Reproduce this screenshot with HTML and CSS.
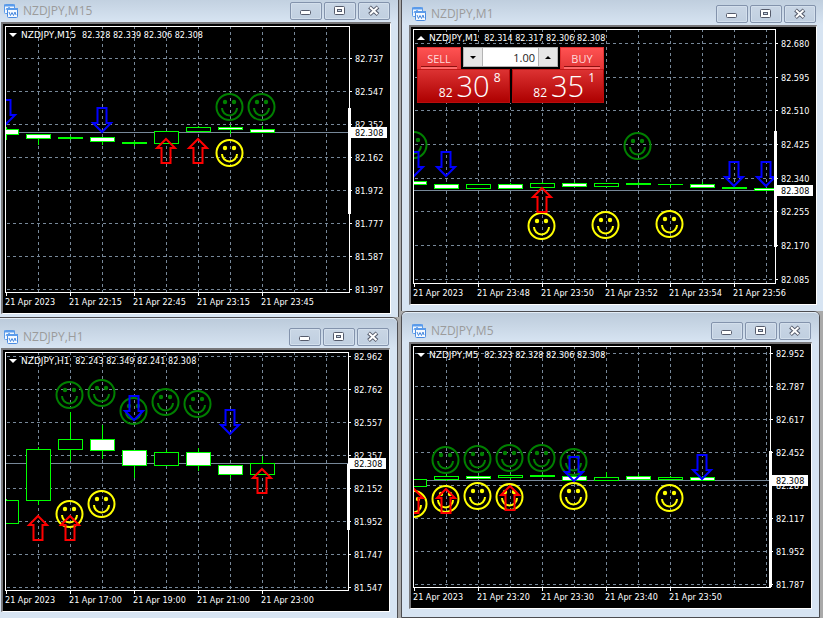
FILE: index.html
```html
<!DOCTYPE html>
<html lang="en">
<head>
  <meta charset="UTF-8">
  <meta name="viewport" content="width=device-width, initial-scale=1.0">
  <title>NZDJPY Charts</title>
  <link rel="stylesheet" href="styles.css">
</head>
<body>
  <!-- Shared icons -->
  <svg class="sprite" aria-hidden="true">
    <symbol id="icon-chart" viewBox="0 0 14 14">
      <rect x="0.5" y="0.5" width="10" height="9" rx="1" fill="#f4f9ff" stroke="#5b9bea"/>
      <path d="M0 1.5h11" stroke="#5b9bea" stroke-width="2"/>
      <path d="M2 6l1-2 1 2 1-3 1 2 1-1 1 2" fill="none" stroke="#5b9bea"/>
      <rect x="3.5" y="4.5" width="10" height="9" rx="1" fill="#f4f9ff" stroke="#4a8be0"/>
      <path d="M3 5h11" stroke="#5b9bea" stroke-width="2"/>
      <path d="M5 8l1.500 3.500L8 8.500l1.500 3L11 8l1 3" fill="none" stroke="#4a8be0"/>
    </symbol>
    <symbol id="icon-min" viewBox="0 0 12 12">
      <rect x="0.500" y="5.500" width="10" height="4" rx="1" fill="#fff" stroke="#555b6b"/>
    </symbol>
    <symbol id="icon-max" viewBox="0 0 12 12">
      <rect x="0.500" y="1.500" width="10" height="8" rx="1" fill="#fff" stroke="#555b6b"/>
      <rect x="3.500" y="4.500" width="4" height="2" fill="#c8d6e6" stroke="#555b6b"/>
    </symbol>
    <symbol id="icon-close" viewBox="0 0 12 12">
      <path d="M1.500 2l8.500 7.500M10 2L1.500 9.500" stroke="#555b6b" stroke-width="4"/>
      <path d="M2 2.300l7.500 6.900M9.500 2.300L2 9.200" stroke="#fff" stroke-width="2"/>
    </symbol>
  </svg>

  <main class="workspace">
    <div class="column column-left">
      <section class="window window-m15">
        <header class="titlebar">
          <svg class="app-icon"><use href="#icon-chart"/></svg>
          <h2>NZDJPY,M15</h2>
          <button type="button" aria-label="Minimize"><svg><use href="#icon-min"/></svg></button>
          <button type="button" aria-label="Maximize"><svg><use href="#icon-max"/></svg></button>
          <button type="button" aria-label="Close"><svg><use href="#icon-close"/></svg></button>
        </header>
        <div class="chart" data-chart="m15"></div>
      </section>

      <section class="window window-h1">
        <header class="titlebar">
          <svg class="app-icon"><use href="#icon-chart"/></svg>
          <h2>NZDJPY,H1</h2>
          <button type="button" aria-label="Minimize"><svg><use href="#icon-min"/></svg></button>
          <button type="button" aria-label="Maximize"><svg><use href="#icon-max"/></svg></button>
          <button type="button" aria-label="Close"><svg><use href="#icon-close"/></svg></button>
        </header>
        <div class="chart" data-chart="h1"></div>
      </section>
    </div>

    <div class="column column-right">
      <section class="window window-m1">
        <header class="titlebar">
          <svg class="app-icon"><use href="#icon-chart"/></svg>
          <h2>NZDJPY,M1</h2>
          <button type="button" aria-label="Minimize"><svg><use href="#icon-min"/></svg></button>
          <button type="button" aria-label="Maximize"><svg><use href="#icon-max"/></svg></button>
          <button type="button" aria-label="Close"><svg><use href="#icon-close"/></svg></button>
        </header>
        <div class="chart" data-chart="m1">
          <!-- One click trading -->
          <form class="trade">
            <div class="trade-top">
              <button type="button" class="side">SELL</button>
              <div class="volume">
                <button type="button" aria-label="Decrease volume"><span class="arrow arrow-down"></span></button>
                <input type="text" value="1.00" aria-label="Volume">
                <button type="button" aria-label="Increase volume"><span class="arrow arrow-up"></span></button>
              </div>
              <button type="button" class="side">BUY</button>
            </div>
            <div class="trade-prices">
              <button type="button" class="price"><small>82</small><b>30</b><sup>8</sup></button>
              <button type="button" class="price"><small>82</small><b>35</b><sup>1</sup></button>
            </div>
          </form>
        </div>
      </section>

      <section class="window window-m5">
        <header class="titlebar">
          <svg class="app-icon"><use href="#icon-chart"/></svg>
          <h2>NZDJPY,M5</h2>
          <button type="button" aria-label="Minimize"><svg><use href="#icon-min"/></svg></button>
          <button type="button" aria-label="Maximize"><svg><use href="#icon-max"/></svg></button>
          <button type="button" aria-label="Close"><svg><use href="#icon-close"/></svg></button>
        </header>
        <div class="chart" data-chart="m5"></div>
      </section>
    </div>
  </main>

  <script src="script.js"></script>
</body>
</html>
```

FILE: styles.css
```css
/* General Styles */
* {
  box-sizing: border-box;
}

body {
  margin: 0;
  background-color: #a9a9a9;
  font-family: "Open Sans", "Noto Sans", sans-serif;
}

button, input {
  margin: 0;
  padding: 0;
  font-family: inherit;
}

.sprite {
  display: none;
}

/* Workspace: the outer window edges run past the viewport */
.workspace {
  display: flex;
  gap: 2px;
  min-height: 100vh;
  overflow: hidden;
}

.column {
  display: flex;
  flex-direction: column;
  min-width: 0;
}

.column-left {
  flex: 1 1 406px;
  margin: -9px 0 0 -7px;
}

.column-right {
  flex: 1 1 424px;
  margin: -6px -2px 0 0;
}

/* Windows */
.window {
  padding: 0 7px 8px;
  border: 1px solid #4c4c50;
  border-bottom: 0;
  border-radius: 6px 6px 0 0;
  background: #d7e4f2;
}

.window-m15 {
  padding-bottom: 3px;
}

.window-m1 {
  padding-bottom: 6px;
}

.window-h1 {
  margin-right: 1px;
  padding-bottom: 6px;
}

.window-m5 {
  margin-right: 5px;
  border-bottom: 1px solid #4c4c50;
}

.titlebar {
  display: flex;
  align-items: center;
  gap: 2px;
  height: 30px;
  margin: 0 -7px;
  padding: 9px 8px 3px 10px;
  border-top: 1px solid #e4edf6;
  border-radius: 5px 5px 0 0;
  background: linear-gradient(#bccbdb, #d7e4f2);
}

.titlebar h2 {
  flex: 1;
  margin: 0;
  padding-left: 3px;
  font-size: 12px;
  font-weight: 400;
  line-height: 18px;
  color: #9b9b9b;
}

.app-icon {
  width: 14px;
  height: 14px;
}

.titlebar button {
  display: flex;
  align-items: center;
  justify-content: center;
  width: 32px;
  height: 18px;
  border: 1px solid #8393ac;
  border-radius: 2px;
  background: linear-gradient(#c9d6e5, #c0cfe0);
  box-shadow: inset 0 0 0 1px #d3dfec;
}

.titlebar button svg {
  width: 12px;
  height: 12px;
}

/* Charts */
.chart {
  position: relative;
  border: 1px solid #fff;
  border-width: 2px 1px 1px 2px;
  border-top-color: #77777a;
  border-left-color: #77777a;
  background: #000;
}

.chart svg {
  display: block;
  width: 100%;
}

.window-m15 .chart svg {
  height: 289px;
}

.window-h1 .chart svg {
  height: 261px;
}

.window-m1 .chart svg {
  height: 277px;
}

.window-m5 .chart svg {
  height: 264px;
}

.chart text {
  font-family: "DejaVu Sans Condensed", "DejaVu Sans", sans-serif;
  font-size: 9px;
  white-space: pre;
  fill: #fff;
}

.chart .symbol {
  font-family: "DejaVu Sans", sans-serif;
}

.chart .tag-text {
  fill: #000;
}

.crisp {
  shape-rendering: crispEdges;
}

.grid {
  stroke: #778899;
  stroke-dasharray: 3 3;
}

.price-line {
  stroke: #778899;
}

.axis {
  fill: none;
  stroke: #fff;
}

.fill-white {
  fill: #fff;
}

.candle {
  stroke: #0f0;
}

.candle-up {
  fill: #000;
}

.candle-down {
  fill: #fff;
}

.candle-doji {
  fill: #0f0;
  stroke: none;
}

.face {
  fill: none;
  stroke-width: 2;
}

.face-green {
  color: #008000;
  stroke: currentColor;
}

.face-yellow {
  color: #ff0;
  stroke: currentColor;
}

.eye {
  fill: currentColor;
  stroke: none;
}

.signal {
  fill: none;
  stroke-width: 2;
}

.signal-down {
  stroke: #00f;
}

.signal-up {
  stroke: #f00;
}

/* Trade panel sits over the chart */
.trade {
  position: absolute;
  top: 20px;
  left: 6px;
  width: 187px;
  background: #000;
}

.trade-top {
  display: flex;
  gap: 2px;
  height: 22px;
}

.side {
  position: relative;
  flex: none;
  width: 44px;
  border: 1px solid #e03030;
  border-bottom: 0;
  background: linear-gradient(#ff5252, #e23636);
  color: #ffdada;
  font-size: 11px;
  line-height: 20px;
}

.side::after {
  content: "";
  position: absolute;
  right: 3px;
  bottom: 0;
  left: 3px;
  height: 2px;
  border-top: 1px solid #8e1010;
  background: #ff6a6a;
}

.volume {
  display: flex;
  flex: 1;
  min-width: 0;
  height: 20px;
  border: 1px solid #b4b4b4;
  background: #fff;
}

.volume button {
  display: flex;
  flex: none;
  align-items: center;
  justify-content: center;
  width: 18px;
  border: 0;
  background: #e6e6e6;
}

.volume input {
  flex: 1;
  width: 0;
  min-width: 0;
  padding-right: 3px;
  border: 1px solid #b4b4b4;
  border-width: 0 1px;
  background: #fff;
  color: #222;
  font-size: 11px;
  text-align: right;
}

.arrow {
  border: 3px solid transparent;
}

.arrow-down {
  border-top-color: #000;
  border-bottom: 0;
}

.arrow-up {
  border-bottom-color: #000;
  border-top: 0;
}

.trade-prices {
  display: flex;
  gap: 2px;
}

.price {
  display: flex;
  flex: 1;
  align-items: baseline;
  justify-content: flex-end;
  gap: 4px;
  height: 34px;
  padding-right: 8px;
  border: 1px solid #b80c0c;
  border-top-color: #c01818;
  background: linear-gradient(#dc3232, #ad0000);
  color: #fff;
}

.price small {
  font-size: 12px;
  line-height: 12px;
}

.price b {
  font-size: 29px;
  font-weight: 300;
  line-height: 32px;
}

.price sup {
  align-self: flex-start;
  padding-top: 2px;
  font-size: 12px;
  line-height: 12px;
}

/* Narrow screens: stack the windows */
@media (max-width: 640px) {
  .workspace {
    flex-direction: column;
  }

  .column {
    flex: none;
    margin: 0;
  }
}
```

FILE: script.js
```javascript
// Candles: [type, bodyTop, bodyBottom, wickTop, wickBottom]
// Faces and signals: [kind, bar index, y]
const charts = {
  m15: {
    symbol: 'NZDJPY,M15',
    quotes: '82.328 82.339 82.306 82.308',
    rows: [34, 67, 100, 133, 166, 199, 232, 265],
    prices: ['82.737', '82.547', '82.352', '82.162', '81.972', '81.777', '81.587', '81.397'],
    dates: ['21 Apr 2023', '21 Apr 22:15', '21 Apr 22:45', '21 Apr 23:15', '21 Apr 23:45'],
    price: 108,
    range: [84, 190],
    candles: [
      ['down', 105, 111, 103, 116],
      ['down', 110, 115, 110, 121],
      ['doji', 113, 115, 112, 116],
      ['down', 113, 118, 113, 121],
      ['doji', 118, 120, 117, 122],
      ['up', 107, 120, 107, 120],
      ['up', 103, 108, 102, 108],
      ['down', 103, 106, 101, 110],
      ['down', 105, 109, 102, 109]
    ],
    faces: [['green', 7, 83], ['green', 8, 83], ['yellow', 7, 129]],
    signals: [['down', 0, 101], ['down', 3, 109], ['up', 5, 114], ['up', 6, 114]]
  },
  h1: {
    symbol: 'NZDJPY,H1',
    quotes: '82.243 82.349 82.241 82.308',
    rows: [6, 39, 72, 105, 138, 171, 204, 237],
    prices: ['82.962', '82.762', '82.557', '82.357', '82.152', '81.952', '81.747', '81.547'],
    dates: ['21 Apr 2023', '21 Apr 17:00', '21 Apr 19:00', '21 Apr 21:00', '21 Apr 23:00'],
    price: 113,
    range: [114, 180],
    candles: [
      ['up', 150, 174, 149, 174],
      ['up', 99, 151, 97, 155],
      ['up', 89, 100, 62, 111],
      ['down', 89, 101, 75, 109],
      ['down', 100, 116, 100, 128],
      ['up', 102, 116, 100, 116],
      ['down', 102, 116, 98, 121],
      ['down', 115, 125, 115, 128],
      ['up', 113, 125, 106, 125]
    ],
    faces: [
      ['green', 2, 45], ['green', 3, 43], ['green', 4, 61], ['green', 5, 52], ['green', 6, 54],
      ['yellow', 2, 164], ['yellow', 3, 154]
    ],
    signals: [['down', 4, 71], ['down', 7, 85], ['up', 1, 165], ['up', 2, 165], ['up', 8, 118]]
  },
  m1: {
    symbol: 'NZDJPY,M1',
    quotes: '82.314 82.317 82.306 82.308',
    panelOpen: true,
    rows: [16, 50, 83, 117, 151, 184, 218, 252],
    prices: ['82.680', '82.595', '82.510', '82.425', '82.340', '82.255', '82.170', '82.085'],
    dates: ['21 Apr 2023', '21 Apr 23:48', '21 Apr 23:50', '21 Apr 23:52', '21 Apr 23:54', '21 Apr 23:56'],
    price: 163,
    range: [104, 220],
    candles: [
      ['down', 154, 158, 154, 158],
      ['down', 157, 162, 157, 162],
      ['up', 157, 162, 157, 162],
      ['down', 157, 162, 156, 162],
      ['up', 156, 161, 155, 161],
      ['down', 156, 160, 155, 160],
      ['up', 156, 160, 156, 160],
      ['doji', 156, 158, 155, 158],
      ['doji', 157, 158, 157, 161],
      ['down', 157, 161, 155, 161],
      ['doji', 160, 162, 159, 162],
      ['down', 161, 164, 161, 164]
    ],
    faces: [['green', 0, 118], ['green', 7, 119], ['yellow', 4, 199], ['yellow', 6, 198], ['yellow', 8, 197]],
    signals: [['down', 0, 150], ['down', 1, 150], ['down', 10, 160], ['down', 11, 160], ['up', 4, 160]]
  },
  m5: {
    symbol: 'NZDJPY,M5',
    quotes: '82.323 82.328 82.306 82.308',
    rows: [9, 42, 75, 108, 141, 174, 207, 240],
    prices: ['82.952', '82.787', '82.617', '82.452', '82.287', '82.117', '81.952', '81.787'],
    dates: ['21 Apr 2023', '21 Apr 23:20', '21 Apr 23:30', '21 Apr 23:40', '21 Apr 23:50'],
    price: 136,
    range: [107, 243],
    candles: [
      ['up', 135, 143, 135, 143],
      ['up', 132, 136, 131, 137],
      ['down', 132, 135, 131, 135],
      ['up', 131, 134, 130, 135],
      ['doji', 131, 133, 130, 133],
      ['down', 132, 137, 132, 138],
      ['up', 133, 137, 128, 137],
      ['down', 132, 136, 130, 136],
      ['up', 133, 136, 132, 136],
      ['down', 133, 137, 132, 137]
    ],
    faces: [
      ['green', 1, 116], ['green', 2, 115], ['green', 3, 114], ['green', 4, 114], ['green', 5, 118],
      ['yellow', 0, 160], ['yellow', 1, 155], ['yellow', 2, 152], ['yellow', 3, 153],
      ['yellow', 5, 152], ['yellow', 8, 154]
    ],
    signals: [['down', 5, 138], ['down', 9, 136], ['up', 0, 144], ['up', 1, 144], ['up', 3, 141]]
  }
};

const BAR = 32;
const LEFT = 2;
const TOP = 2;

// x of the middle of a bar
const barX = (i) => LEFT + 1 + i * BAR;

function line(x1, y1, x2, y2, cls) {
  return `<path class="crisp ${cls}" fill="none" d="M${x1} ${y1}L${x2} ${y2}"/>`;
}

function candle([type, top, bottom, high, low], i) {
  const x = barX(i);
  let out = line(x + 0.5, high, x + 0.5, low, 'candle');
  if (type === 'doji') {
    out += `<rect class="crisp candle-doji" x="${x - 12}" y="${top}" width="25" height="${bottom - top}"/>`;
  } else {
    out += `<rect class="crisp candle candle-${type}" x="${x - 11.5}" y="${top + 0.5}" width="24" height="${bottom - top - 1}"/>`;
  }
  return out;
}

function face([color, i, y]) {
  return `<g class="face face-${color}" transform="translate(${barX(i) - 0.5} ${y})">
    <circle r="13"/>
    <circle class="eye" cx="-4.5" cy="-5" r="2.2"/>
    <circle class="eye" cx="4.5" cy="-5" r="2.2"/>
    <path d="M-7.500 1a7.500 7.500 0 0 0 15 0"/>
  </g>`;
}

function signal([type, i, y]) {
  const flip = type === 'up' ? ' scale(1 -1)' : '';
  return `<path class="signal signal-${type}" transform="translate(${barX(i)} ${y})${flip}"
    d="M-4.500-25h9v15h4.500L0-1-9-10h4.500z"/>`;
}

function drawChart(box) {
  const name = box.dataset.chart;
  const data = charts[name];
  const old = box.querySelector('svg');
  if (old) old.remove();

  const svg = document.createElementNS('http://www.w3.org/2000/svg', 'svg');
  box.prepend(svg);
  const right = box.clientWidth - 41;
  const bottom = svg.getBoundingClientRect().height - 21;

  let out = `<clipPath id="clip-${name}"><rect x="${LEFT + 1}" y="${TOP}" width="${right - LEFT - 1}" height="${bottom - TOP}"/></clipPath>`;

  // Grid
  for (let x = barX(1); x < right; x += BAR) {
    out += line(x + 0.5, TOP, x + 0.5, bottom, 'grid');
  }
  data.rows.forEach((y) => {
    out += line(LEFT + 2, y + 0.5, right, y + 0.5, 'grid');
    out += line(right, y + 0.5, right + 3, y + 0.5, 'axis');
  });
  out += line(LEFT, data.price + 0.5, right, data.price + 0.5, 'price-line');

  // Bars and markers
  out += `<g clip-path="url(#clip-${name})">`;
  out += data.candles.map(candle).join('');
  out += data.faces.map(face).join('');
  out += data.signals.map(signal).join('');
  out += '</g>';

  // Axes
  out += `<rect class="crisp axis" x="${LEFT + 0.5}" y="${TOP + 0.5}" width="${right - LEFT}" height="${bottom - TOP}"/>`;
  out += `<rect class="fill-white" x="${right - 1}" y="${data.range[0]}" width="3" height="${data.range[1] - data.range[0]}"/>`;
  data.prices.forEach((p, i) => {
    out += `<text x="${right + 6}" y="${data.rows[i] + 4}">${p}</text>`;
  });
  data.dates.forEach((d, i) => {
    const x = barX(i * 2);
    out += line(x + 0.5, bottom, x + 0.5, bottom + 4, 'axis');
    out += `<text x="${x - 1}" y="${bottom + 13}">${d}</text>`;
  });
  out += `<rect class="fill-white" x="${right + 1}" y="${data.price - 5}" width="37" height="11"/>`;
  out += `<text class="tag-text" x="${right + 6}" y="${data.price + 4}">82.308</text>`;

  // Header
  out += `<path class="fill-white" d="${data.panelOpen ? 'M6 13h8l-4-4z' : 'M6 9h8l-4 4z'}"/>`;
  out += `<text x="18" y="14"><tspan class="symbol">${data.symbol}  </tspan>${data.quotes}</text>`;

  svg.innerHTML = out;
}

function drawAll() {
  document.querySelectorAll('.chart').forEach(drawChart);
}

drawAll();
window.addEventListener('resize', drawAll);
```
